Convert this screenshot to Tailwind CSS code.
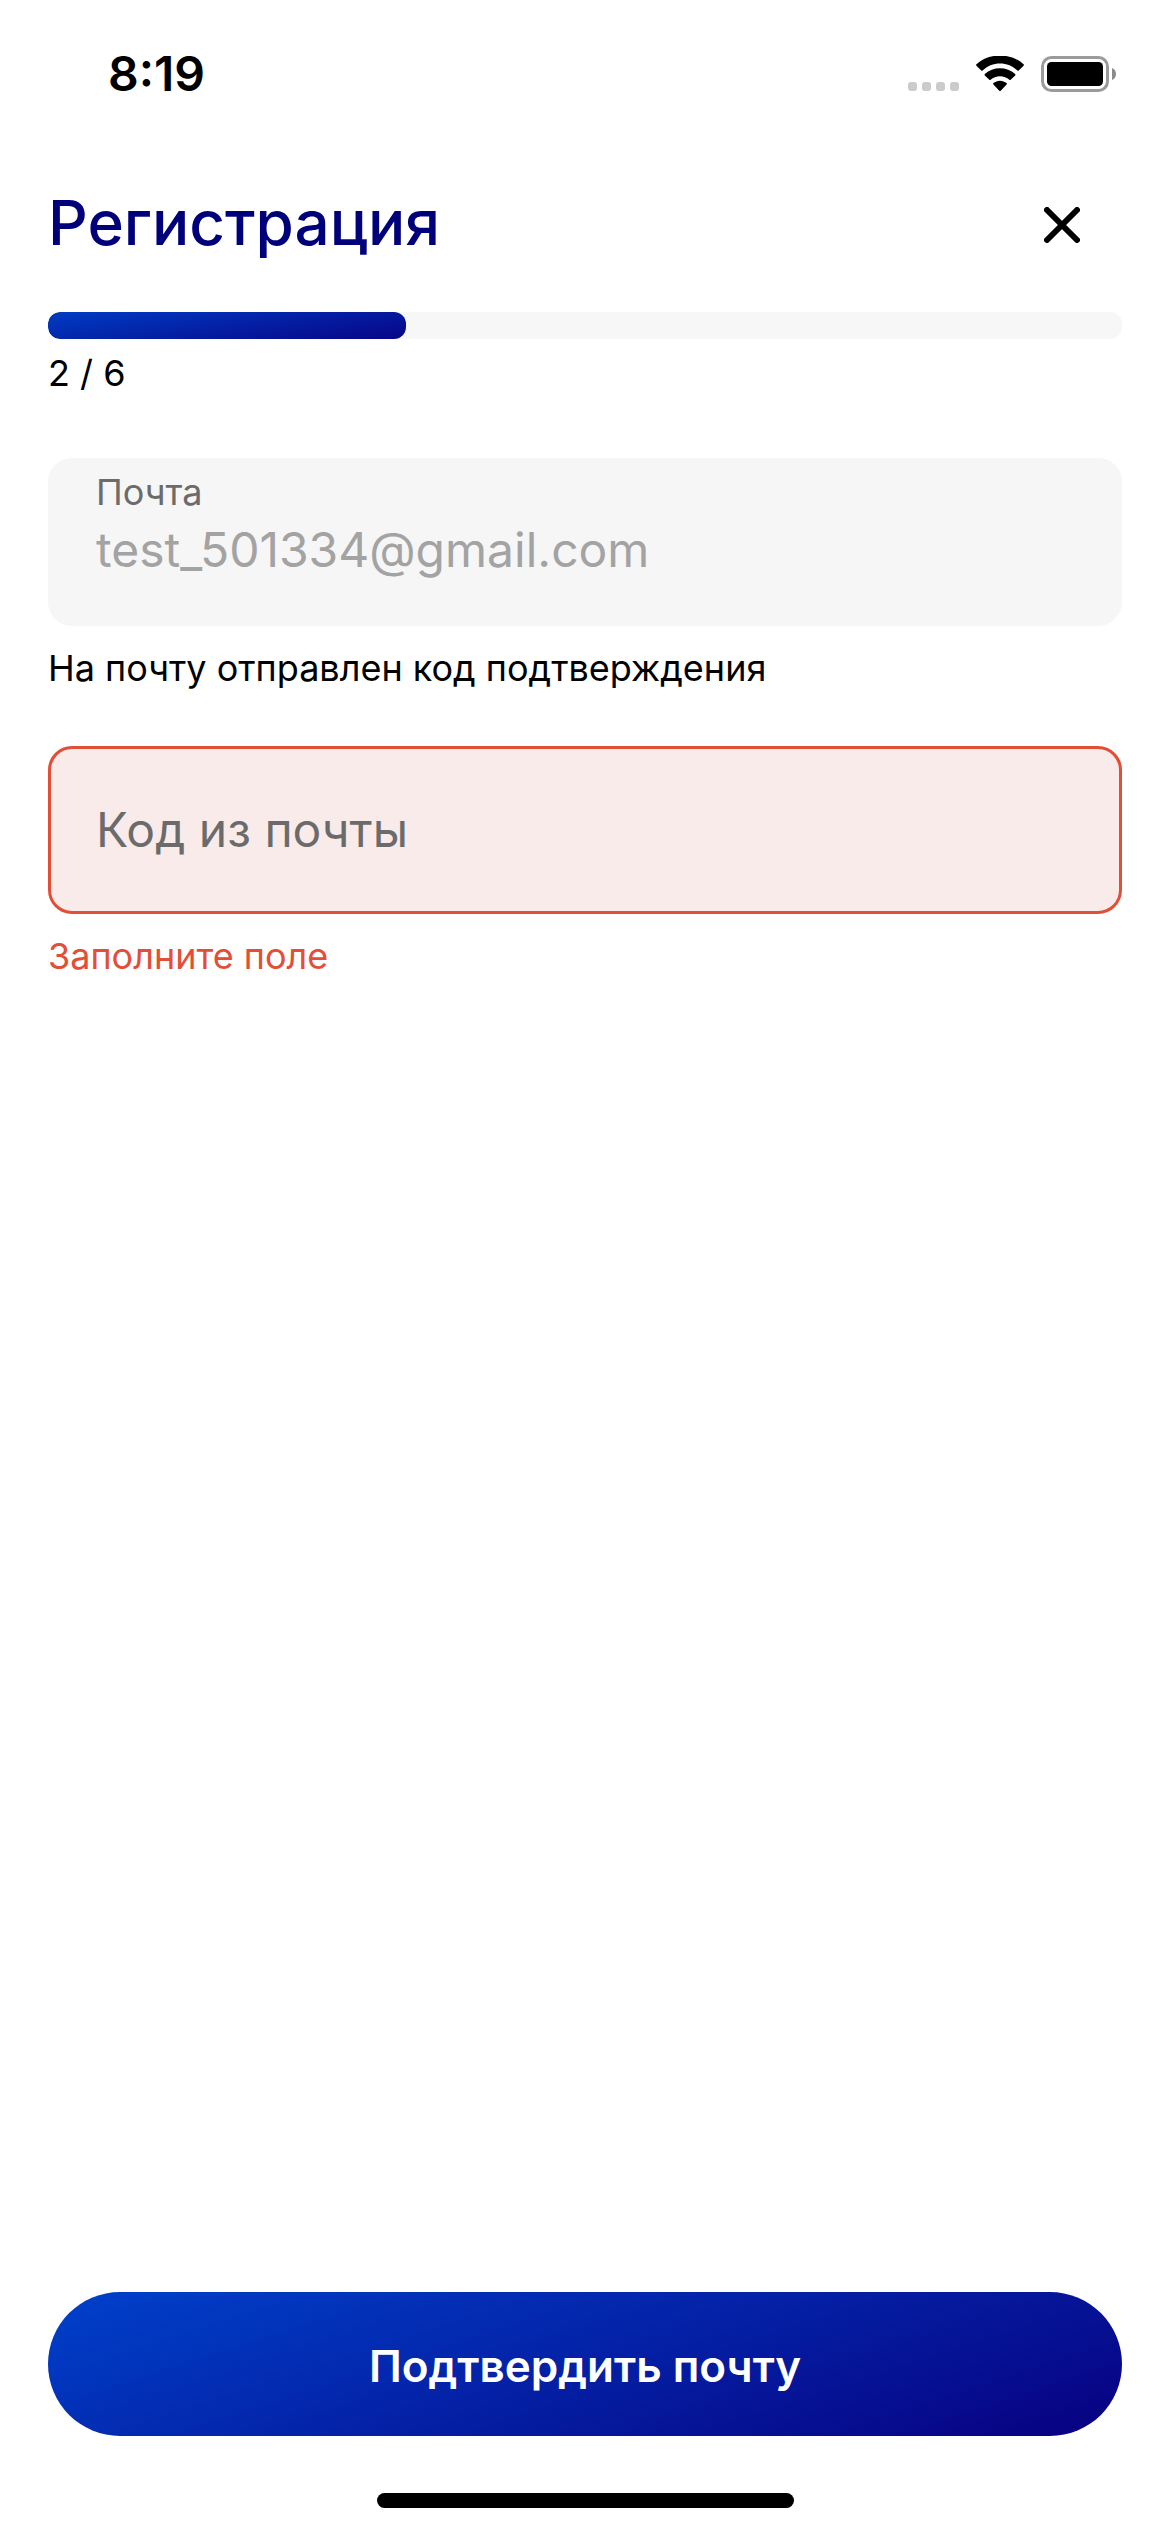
<!DOCTYPE html>
<html lang="ru">
<head>
<meta charset="utf-8">
<meta name="viewport" content="width=device-width, initial-scale=1">
<title>Регистрация</title>
<script src="https://cdn.jsdelivr.net/npm/@tailwindcss/browser@4"></script>
</head>
<body class="flex min-h-screen flex-col bg-white font-['Inter',sans-serif] text-black">
  <!-- Status bar -->
  <div class="flex h-[148px] items-center justify-between pr-[54px] pl-[108px]">
    <time class="text-[48px] leading-none font-semibold">8:19</time>
    <div class="flex items-end gap-[17px]">
      <svg class="h-9 w-[51px]" viewBox="0 0 51 36" fill="#cbcbcb" aria-hidden="true">
        <rect x="0" y="26" width="9" height="9" rx="3"/><rect x="14" y="26" width="9" height="9" rx="3"/><rect x="28" y="26" width="9" height="9" rx="3"/><rect x="42" y="26" width="9" height="9" rx="3"/>
      </svg>
      <svg class="h-9 w-12" viewBox="0 0 48 36" fill="#000" aria-hidden="true">
        <path d="M24 7.6c6.500 0 12.700 2.500 17.400 7 .4.3.9.3 1.300 0l4.900-4.900c.4-.4.4-1 0-1.400C41.200 2.400 32.700-.5 24-.5S6.800 2.400.4 8.300c-.4.4-.4 1 0 1.400l4.900 4.900c.4.3.9.3 1.300 0 4.700-4.500 10.900-7 17.400-7z"/>
        <path d="M24 20.200c3.500 0 6.800 1.300 9.400 3.600.4.4.9.3 1.300 0l4.500-4.400c.4-.4.4-1 0-1.400C35 14.200 29.700 12.200 24 12.200S13 14.200 8.800 18c-.4.4-.4 1 0 1.400l4.500 4.400c.4.3.9.4 1.300 0 2.600-2.300 5.900-3.600 9.400-3.600z"/>
        <path d="M30.600 28.500c.4-.4.4-1 0-1.400-1.900-1.500-4.100-2.400-6.600-2.400s-4.700.9-6.600 2.400c-.4.4-.4 1 0 1.400l5.900 6.200c.4.4 1 .4 1.400 0z"/>
      </svg>
      <svg class="h-9 w-[75px]" viewBox="0 0 75 36" aria-hidden="true">
        <rect x="1.500" y="1.500" width="65" height="33" rx="9" fill="none" stroke="#9b9b9b" stroke-width="3"/>
        <rect x="6" y="6" width="56" height="24" rx="4.500"/>
        <path d="M71 12c2.500 1 4 3.300 4 6s-1.500 5-4 6z" fill="#8b8b8b"/>
      </svg>
    </div>
  </div>

  <main class="flex grow flex-col px-12">
    <header class="flex h-[154px] items-center justify-between">
      <h1 class="pb-1 text-[62px] leading-[80px] font-medium text-[#00007b]">Регистрация</h1>
      <button type="button" aria-label="Закрыть" class="flex size-[120px] items-center justify-center">
        <svg class="size-9" viewBox="0 0 36 36" fill="none" stroke="#000" stroke-width="6" stroke-linecap="round"><path d="M3 3 33 33M33 3 3 33"/></svg>
      </button>
    </header>

    <div class="mt-[10px] h-[27px] overflow-hidden rounded-xl bg-[#f7f7f7]" role="progressbar" aria-label="Шаг" aria-valuemin="0" aria-valuemax="6" aria-valuenow="2">
      <div class="h-full w-1/3 rounded-xl bg-[linear-gradient(172deg,#003cc3,#080588)]"></div>
    </div>
    <p class="mt-3 text-4xl leading-11">2 / 6</p>

    <form id="confirm" class="mt-[63px] flex flex-col gap-14">
      <div>
        <div class="flex h-42 flex-col rounded-3xl bg-[#f6f6f6] px-12 pt-3">
          <label for="email" class="text-4xl leading-11 text-[#6b6b6b]">Почта</label>
          <input id="email" type="email" disabled value="test_501334@gmail.com" class="h-[70px] w-full bg-transparent text-5xl text-[#a3a3a3] outline-none">
        </div>
        <p class="mt-5 text-4xl leading-11">На почту отправлен код подтверждения</p>
      </div>
      <div>
        <!-- The label rests over the empty field and moves up once the field is in use -->
        <div class="relative">
          <input id="code" type="text" placeholder=" " aria-invalid="true" aria-describedby="code-error" class="peer block h-42 w-full rounded-3xl border-3 border-[#e24e36] bg-[#f8ebea] px-[45px] text-5xl outline-none">
          <label for="code" class="pointer-events-none absolute top-3 left-12 text-4xl leading-11 text-[#6b6b6b] peer-placeholder-shown:top-[54px] peer-placeholder-shown:text-5xl peer-placeholder-shown:leading-[60px]">Код из почты</label>
        </div>
        <p id="code-error" class="mt-5 text-4xl leading-11 text-[#e24e36]">Заполните поле</p>
      </div>
    </form>
  </main>

  <footer class="flex flex-col items-center px-12 pb-6">
    <button type="submit" form="confirm" class="h-36 w-full rounded-full bg-[linear-gradient(162deg,#0041cb,#080080)] pt-1 text-[44px] font-semibold text-white">Подтвердить почту</button>
    <div class="mt-[57px] h-[15px] w-[417px] rounded-full bg-black"></div>
  </footer>
</body>
</html>
